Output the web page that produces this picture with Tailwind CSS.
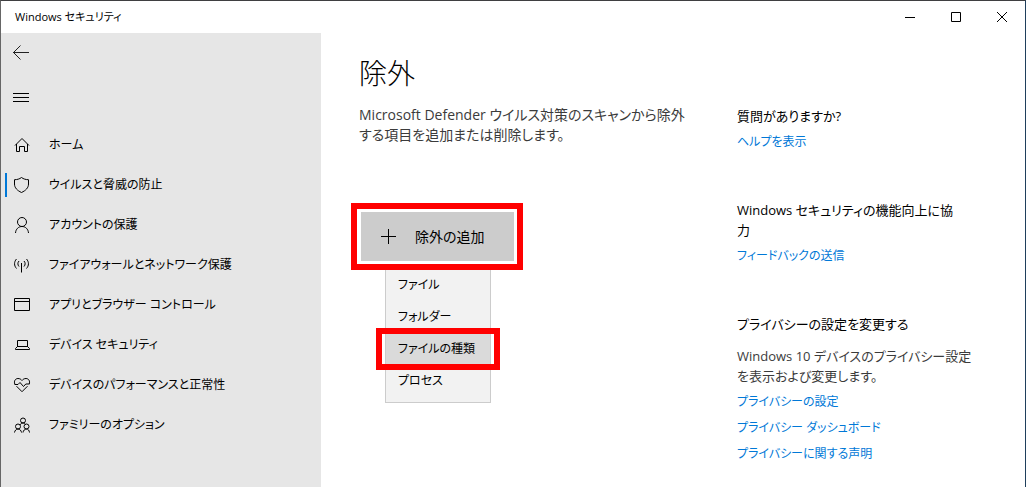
<!DOCTYPE html>
<html lang="ja">
  <head>
    <meta charset="UTF-8" />
    <meta name="viewport" content="width=device-width, initial-scale=1.0" />
    <title>Windows セキュリティ</title>
    <script src="https://cdn.jsdelivr.net/npm/@tailwindcss/browser@4"></script>
    <style>
      body {
        font-family: 'Open Sans', 'Noto Sans CJK JP', sans-serif;
        font-feature-settings: 'palt';
      }
    </style>
  </head>
  <body class="bg-white">
    <div class="min-h-screen flex flex-col border-t border-x border-t-[#3f3f41] border-l-[#666666] border-r-[#1f3f5c] text-sm leading-5 text-black">

      <!-- title bar -->
      <header class="h-8 flex items-center justify-between">
        <span class="pl-3.5 text-[11px]">Windows セキュリティ</span>
        <div class="flex">
          <button class="w-[46px] h-8 flex items-center justify-center" aria-label="最小化">
            <svg class="w-3 h-3" viewBox="0 0 12 12" fill="none" stroke="#000"><path d="M1 6.5h10" /></svg>
          </button>
          <button class="w-[46px] h-8 flex items-center justify-center" aria-label="最大化">
            <svg class="w-3 h-3" viewBox="0 0 12 12" fill="none" stroke="#000"><path d="M1.5 1.5h9v9h-9z" /></svg>
          </button>
          <button class="w-[46px] h-8 flex items-center justify-center" aria-label="閉じる">
            <svg class="w-3 h-3" viewBox="0 0 12 12" fill="none" stroke="#000"><path d="M1 1l10 10M11 1L1 11" /></svg>
          </button>
        </div>
      </header>

      <div class="flex-1 flex">
        <!-- side menu -->
        <nav class="w-80 shrink-0 bg-[#e6e6e6] text-xs">
          <button class="h-10 pl-[11px] flex items-center" aria-label="戻る">
            <svg class="w-[18px] h-[18px]" viewBox="0 0 18 18" fill="none" stroke="#222"><path d="M1 8.5h16M8.5 1.5L1.5 8.5l7 7" /></svg>
          </button>
          <button class="h-12 pl-[11px] flex items-center" aria-label="メニュー">
            <svg class="w-[18px] h-[18px]" viewBox="0 0 18 18" fill="none" stroke="#000"><path d="M1 5.5h16M1 9.5h16M1 13.5h16" /></svg>
          </button>
          <ul class="mt-1">
            <li>
              <a href="#" class="h-10 flex items-center gap-[18px] ml-1 pl-2">
                <svg class="w-[18px] h-[18px]" viewBox="0 0 18 18" fill="none" stroke="#000"><path d="M2 9.5L9 2.500l7 7M3.500 8v7.500h3v-5h5v5h3V8" /></svg>
                ホーム
              </a>
            </li>
            <li>
              <a href="#" class="h-10 flex items-center gap-[18px] ml-1 pl-2 relative">
                <span class="absolute left-0 top-2 h-6 w-0.5 bg-[#0078d7]"></span>
                <svg class="w-[18px] h-[18px]" viewBox="0 0 18 18" fill="none" stroke="#000"><path d="M8.500 1.500c-2 1.500-4.300 2.200-7 2.200v4.300c0 3.800 2.700 6.500 7 8.500 4.300-2 7-4.700 7-8.500V3.700c-2.700 0-5-.7-7-2.200z" /></svg>
                ウイルスと脅威の防止
              </a>
            </li>
            <li>
              <a href="#" class="h-10 flex items-center gap-[18px] ml-1 pl-2">
                <svg class="w-[18px] h-[18px]" viewBox="0 0 18 18" fill="none" stroke="#000"><circle cx="9" cy="6" r="4.500" /><path d="M2.500 17c.3-4 3-6.500 6.500-6.500s6.200 2.500 6.500 6.500" /></svg>
                アカウントの保護
              </a>
            </li>
            <li>
              <a href="#" class="h-10 flex items-center gap-[18px] ml-1 pl-2">
                <svg class="w-[18px] h-[18px]" viewBox="0 0 18 18" fill="none" stroke="#000"><path d="M8.500 7v9.500M3.500 3c-2.600 2.900-2.600 6.600 0 9.500M13.500 3c2.600 2.900 2.600 6.600 0 9.500M6 5c-1.500 1.700-1.500 3.800 0 5.500M11 5c1.500 1.700 1.500 3.800 0 5.500" /></svg>
                ファイアウォールとネットワーク保護
              </a>
            </li>
            <li>
              <a href="#" class="h-10 flex items-center gap-[18px] ml-1 pl-2">
                <svg class="w-[18px] h-[18px]" viewBox="0 0 18 18" fill="none" stroke="#000"><path d="M1.500 2.500h15v12h-15zM1.500 5.500h15" /></svg>
                アプリとブラウザー コントロール
              </a>
            </li>
            <li>
              <a href="#" class="h-10 flex items-center gap-[18px] ml-1 pl-2">
                <svg class="w-[18px] h-[18px]" viewBox="0 0 18 18" fill="none" stroke="#000"><path d="M4.500 11V4.500h10V11M4.500 10.500h10l2 2v1h-14v-1z" /></svg>
                デバイス セキュリティ
              </a>
            </li>
            <li>
              <a href="#" class="h-10 flex items-center gap-[18px] ml-1 pl-2">
                <svg class="w-[18px] h-[18px]" viewBox="0 0 18 18" fill="none" stroke="#000"><path d="M1.800 8C.6 5 2.500 2.500 5 2.500c1.800 0 3 .8 4 2 1-1.200 2.200-2 4-2 2.500 0 4.400 2.500 3.200 5.500M3.500 10.200L9 15.700l5.500-5.500" /><path d="M1.500 8.500H5l2-2 3.500 4 2.300-2.500h3.700" /></svg>
                デバイスのパフォーマンスと正常性
              </a>
            </li>
            <li>
              <a href="#" class="h-10 flex items-center gap-[18px] ml-1 pl-2">
                <svg class="w-[18px] h-[18px]" viewBox="0 0 18 18" fill="none" stroke="#000"><circle cx="10" cy="4.500" r="2.500" /><circle cx="5" cy="10.500" r="2.500" /><circle cx="13.500" cy="10.500" r="2.500" /><path d="M1.500 16.500c.3-2 1.700-3.500 3.500-3.500s3.200 1.500 3.500 3.500M10 16.500c.3-2 1.700-3.500 3.500-3.500s2.700 1.500 3 3.500M7 9c.5-1.300 1.600-2 3-2s2 .7 2.500 1.500" /></svg>
                ファミリーのオプション
              </a>
            </li>
          </ul>
        </nav>

        <!-- content -->
        <main class="flex-1 pl-[38px] pt-6">
          <h1 class="text-[28px] leading-8 font-light">除外</h1>
          <p class="mt-4 text-[#3b3b3b]">Microsoft Defender ウイルス対策のスキャンから除外<br />する項目を追加または削除します。</p>

          <div class="relative mt-[67px] ml-0.5 w-[153px]">
            <button class="w-full h-[49px] flex items-center bg-[#cccccc] pl-5">
              <svg class="w-4 h-4 mr-[18px]" viewBox="0 0 16 16" fill="none" stroke="#000"><path d="M0 7.500h15M7.500 0v15" /></svg>
              除外の追加
            </button>

            <ul class="absolute top-14 left-6 w-[106px] h-[135px] bg-[#f2f2f2] border border-[#cccccc] text-xs">
              <li><button class="w-full h-8 pl-3 text-left">ファイル</button></li>
              <li><button class="w-full h-8 pl-3 text-left">フォルダー</button></li>
              <li class="relative">
                <button class="w-full h-8 pl-3 text-left bg-[#dadada]">ファイルの種類</button>
                <span class="absolute -inset-x-2.5 -inset-y-[5px] border-6 border-[#ff0000] pointer-events-none"></span>
              </li>
              <li><button class="w-full h-8 pl-3 text-left">プロセス</button></li>
            </ul>
            <span class="absolute -inset-y-[9px] -left-2.5 -right-[9px] border-6 border-[#ff0000] pointer-events-none"></span>
          </div>
        </main>

        <!-- help links -->
        <aside class="w-72 shrink-0 pr-8 pt-[73px] text-[13px]">
          <section>
            <h2>質問がありますか?</h2>
            <a href="#" class="block mt-1.5 text-xs leading-5 text-[#0078d7]">ヘルプを表示</a>
          </section>
          <section class="mt-12">
            <h2>Windows セキュリティの機能向上に協<br />力</h2>
            <a href="#" class="block mt-1.5 text-xs leading-5 text-[#0078d7]">フィードバックの送信</a>
          </section>
          <section class="mt-12">
            <h2>プライバシーの設定を変更する</h2>
            <p class="mt-3 text-[#3b3b3b]">Windows 10 デバイスのプライバシー設定<br />を表示および変更します。</p>
            <a href="#" class="block mt-1.5 text-xs leading-5 text-[#0078d7]">プライバシーの設定</a>
            <a href="#" class="block mt-1.5 text-xs leading-5 text-[#0078d7]">プライバシー ダッシュボード</a>
            <a href="#" class="block mt-1.5 text-xs leading-5 text-[#0078d7]">プライバシーに関する声明</a>
          </section>
        </aside>
      </div>
    </div>
  </body>
</html>
